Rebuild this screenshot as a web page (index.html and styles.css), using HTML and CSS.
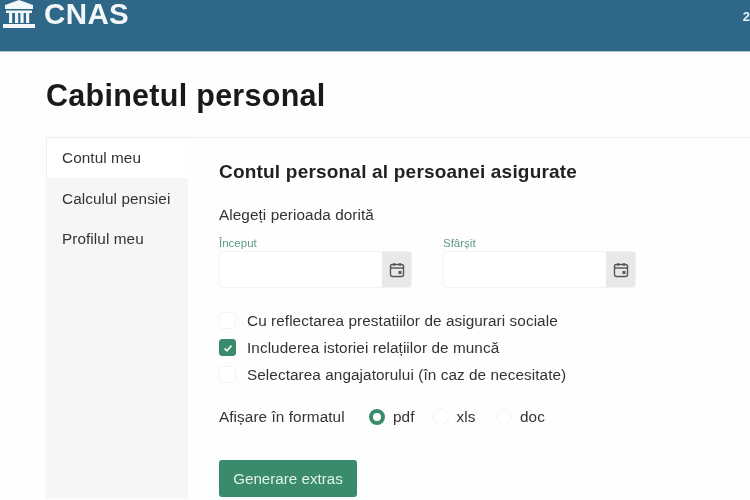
FILE: index.html
```html
<!DOCTYPE html>
<html lang="ro">
<head>
<meta charset="utf-8">
<title>Cabinetul personal</title>
<link rel="stylesheet" href="styles.css">
</head>
<body>
<header class="topbar">
  <div class="brand">
    <svg class="brand-icon" viewBox="0 0 34 30" width="34" height="30" aria-hidden="true">
      <path d="M17 0 L31 5 V9 H3 V5 Z" fill="#f2f8fa"/>
      <rect x="4" y="10.5" width="26" height="2.5" fill="#f2f8fa"/>
      <rect x="7" y="13" width="3.2" height="10" fill="#f2f8fa"/>
      <rect x="13" y="13" width="3.2" height="10" fill="#f2f8fa"/>
      <rect x="18.4" y="13" width="3.2" height="10" fill="#f2f8fa"/>
      <rect x="24" y="13" width="3.2" height="10" fill="#f2f8fa"/>
      <rect x="1" y="24" width="32" height="4" fill="#f2f8fa"/>
    </svg>
    <span class="brand-name">CNAS</span>
  </div>
  <span class="user-mark">2</span>
</header>
<main class="page">
  <h1 class="title">Cabinetul personal</h1>
  <div class="panel">
    <nav class="tabs">
      <a class="tab tab-active">Contul meu</a>
      <a class="tab">Calculul pensiei</a>
      <a class="tab">Profilul meu</a>
      <div class="tabs-fill"></div>
    </nav>
    <section class="content">
      <h2 class="heading">Contul personal al persoanei asigurate</h2>
      <p class="period">Alegeți perioada dorită</p>
      <div class="dates">
        <div class="field">
          <label class="field-label">Început</label>
          <div class="date-input">
            <span class="date-value"></span>
            <span class="date-btn">
              <svg viewBox="0 0 16 16" width="16" height="16" aria-hidden="true"><rect x="1.5" y="2.5" width="13" height="12" rx="2" fill="none" stroke="#555" stroke-width="1.4"/><path d="M1.5 6H14.5" stroke="#555" stroke-width="1.4"/><path d="M5 1V4M11 1V4" stroke="#555" stroke-width="1.4"/><rect x="9.5" y="9" width="3" height="3" fill="#555"/></svg>
            </span>
          </div>
        </div>
        <div class="field">
          <label class="field-label">Sfârșit</label>
          <div class="date-input">
            <span class="date-value"></span>
            <span class="date-btn">
              <svg viewBox="0 0 16 16" width="16" height="16" aria-hidden="true"><rect x="1.5" y="2.5" width="13" height="12" rx="2" fill="none" stroke="#555" stroke-width="1.4"/><path d="M1.5 6H14.5" stroke="#555" stroke-width="1.4"/><path d="M5 1V4M11 1V4" stroke="#555" stroke-width="1.4"/><rect x="9.5" y="9" width="3" height="3" fill="#555"/></svg>
            </span>
          </div>
        </div>
      </div>
      <ul class="checks">
        <li class="check"><span class="box"></span>Cu reflectarea prestatiilor de asigurari sociale</li>
        <li class="check"><span class="box box-on"><svg viewBox="0 0 12 12" width="12" height="12" aria-hidden="true"><path d="M2.5 6.5L5 8.8L9.5 3.6" fill="none" stroke="#e8f5ef" stroke-width="1.8"/></svg></span>Includerea istoriei relațiilor de muncă</li>
        <li class="check"><span class="box"></span>Selectarea angajatorului (în caz de necesitate)</li>
      </ul>
      <div class="format">
        <span class="format-label">Afișare în formatul</span>
        <span class="radio radio-on"></span><span class="radio-text">pdf</span>
        <span class="radio"></span><span class="radio-text">xls</span>
        <span class="radio"></span><span class="radio-text">doc</span>
      </div>
      <button class="generate" type="button">Generare extras</button>
    </section>
  </div>
</main>
</body>
</html>
```
FILE: styles.css
```css
* { box-sizing: border-box; }
html, body { margin: 0; height: 100%; }
body {
  width: 750px;
  height: 500px;
  overflow: hidden;
  background: #fefefe;
  color: #2b2b2b;
  font-family: "Liberation Sans", Arial, sans-serif;
  filter: blur(0.4px);
}
.topbar {
  display: flex;
  justify-content: space-between;
  align-items: flex-start;
  height: 52px;
  background: #2f6788;
  border-bottom: 1px solid #a9c3d2;
  padding-left: 2px;
}
.brand { display: flex; align-items: flex-start; gap: 8px; height: 30px; }
.brand-icon { display: block; }
.brand-name {
  margin-top: 1px;
  font-size: 29.5px;
  line-height: 26px;
  letter-spacing: 0.4px;
  font-weight: 700;
  color: #f2f8fa;
}
.user-mark {
  margin-top: 9px;
  font-size: 13px;
  line-height: 16px;
  font-weight: 700;
  color: #e6f1f6;
}
.page { padding: 0 0 0 46px; }
.title {
  margin: 25px 0 0;
  font-size: 30.5px;
  line-height: 36px;
  letter-spacing: 0.28px;
  font-weight: 700;
  color: #1a1a1a;
}
.panel {
  display: flex;
  margin-top: 24px;
  height: 362px;
  border-top: 1px solid #efefef;
}
.tabs { width: 142px; display: flex; flex-direction: column; flex: none; }
.tab {
  display: block;
  height: 40px;
  padding: 12px 0 0 16px;
  font-size: 15.3px;
  line-height: 18px;
  letter-spacing: 0.08px;
  background: #f6f6f6;
  color: #333;
}
.tab-active { background: #fff; border-left: 1px solid #efefef; padding: 11px 0 0 15px; }
.tabs-fill { flex: 1; background: #f6f6f6; }
.content { padding: 23px 0 0 31px; flex: 1; }
.heading {
  margin: 0;
  font-size: 19px;
  line-height: 22px;
  letter-spacing: 0.2px;
  font-weight: 700;
  color: #222;
}
.period { margin: 23px 0 0; font-size: 15.3px; line-height: 18px; letter-spacing: 0.08px; color: #333; }
.dates { display: flex; gap: 31px; margin-top: 13px; }
.field { width: 193px; }
.field-label { display: block; font-size: 11.5px; line-height: 12px; color: #5d9c82; }
.date-input {
  display: flex;
  height: 37px;
  margin-top: 2px;
  border: 1px solid #f3f3f3;
  border-radius: 3px;
  background: #fff;
}
.date-value { flex: 1; }
.date-btn {
  width: 29px;
  background: #e9e9e9;
  display: flex;
  align-items: center;
  justify-content: center;
}
.checks { list-style: none; margin: 19px 0 0; padding: 0; }
.check {
  display: flex;
  align-items: center;
  gap: 11px;
  height: 27px;
  font-size: 15.3px;
  letter-spacing: 0.08px;
  color: #333;
}
.box {
  width: 17px;
  height: 17px;
  border: 1px solid #f3f3f3;
  border-radius: 3px;
  background: #fff;
  display: flex;
  align-items: center;
  justify-content: center;
  flex: none;
}
.box-on { background: #3a8a6c; border-color: #3a8a6c; }
.format { display: flex; align-items: center; margin-top: 20px; height: 18px; font-size: 15.3px; letter-spacing: 0.08px; color: #333; }
.format-label { width: 150px; flex: none; }
.radio {
  width: 16px;
  height: 16px;
  border: 1px solid #f3f3f3;
  border-radius: 50%;
  background: #fff;
  flex: none;
}
.radio-on { border: 4px solid #3a8a6c; }
.radio-text { width: 47.5px; padding-left: 8px; flex: none; }
.generate {
  display: block;
  width: 138px;
  height: 37px;
  margin-top: 34px;
  border: 0;
  border-radius: 3px;
  background: #3a8a6c;
  color: #dff3ea;
  font-family: inherit;
  font-size: 15.2px;
  padding: 0;
}
```
